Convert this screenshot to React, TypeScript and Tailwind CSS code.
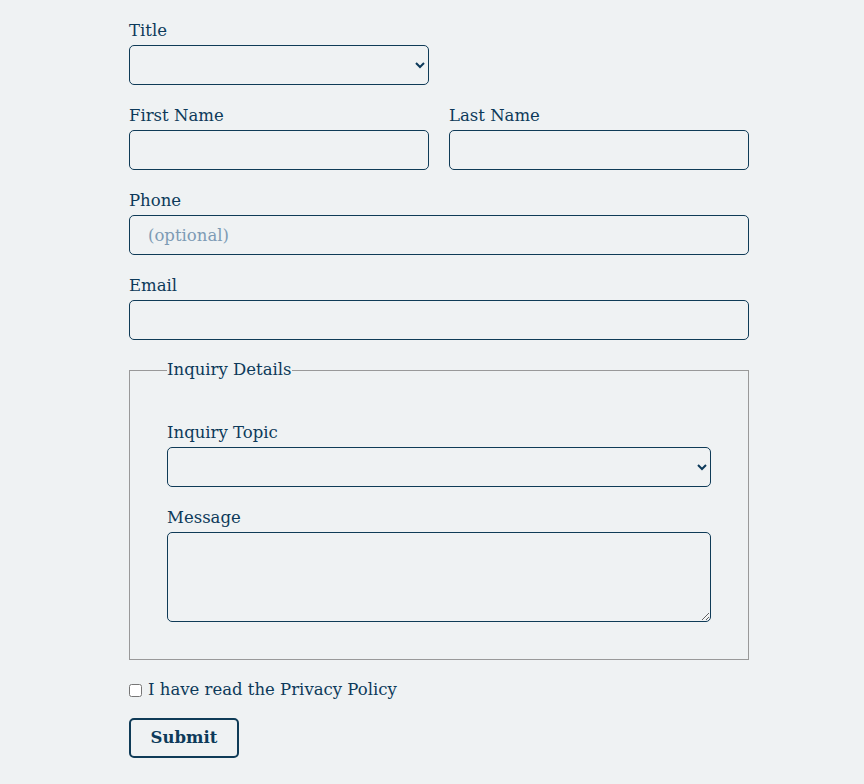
const font = { fontFamily: '"DejaVu Serif", serif' };

function Label({ children }: { children: React.ReactNode }) {
    return <label className="block text-[16.5px] leading-[22px] mb-[3px] text-[#0d3a5a]">{children}</label>;
}

const inputCls =
    "block w-full h-[40px] rounded-[5px] border border-[#0f3b57] bg-transparent px-[18px] text-[16.5px] text-[#0d3a5a] placeholder:text-[#7d9bb5] outline-none";

export default function App() {
    return (
        <div className="min-h-[784px] bg-[#eff2f3] pt-[20px]" style={font}>
            <form className="w-[620px] ml-[129px] text-[#0d3a5a]">
                <div className="mb-[20px]">
                    <Label>Title</Label>
                    <select className={inputCls + " w-[300px] px-[6px]"} style={{ width: 300 }}>
                        <option></option>
                    </select>
                </div>
                <div className="mb-[20px] grid grid-cols-2 gap-[20px]">
                    <div>
                        <Label>First Name</Label>
                        <input className={inputCls} />
                    </div>
                    <div>
                        <Label>Last Name</Label>
                        <input className={inputCls} />
                    </div>
                </div>
                <div className="mb-[20px]">
                    <Label>Phone</Label>
                    <input className={inputCls} placeholder="(optional)" />
                </div>
                <div className="mb-[19px]">
                    <Label>Email</Label>
                    <input className={inputCls} />
                </div>
                <fieldset className="border border-[#999] px-[37px] pt-[41px] pb-[37px]">
                    <legend className="text-[16.5px] leading-[22px]">Inquiry Details</legend>
                    <div className="mb-[20px]">
                        <Label>Inquiry Topic</Label>
                        <select className={inputCls + " px-[6px]"}>
                            <option></option>
                        </select>
                    </div>
                    <div>
                        <Label>Message</Label>
                        <textarea className="block w-full h-[90px] rounded-[5px] border border-[#0f3b57] bg-transparent px-[18px] py-[8px] text-[16.5px] outline-none" />
                    </div>
                </fieldset>
                <div className="mt-[19px] flex items-center h-[22px]">
                    <input type="checkbox" className="w-[13px] h-[13px] m-0 mr-[6px]" />
                    <span className="text-[16.5px] leading-[22px]">I have read the Privacy Policy</span>
                </div>
                <button
                    type="button"
                    className="mt-[17px] w-[110px] h-[40px] rounded-[5px] border-2 border-[#0f3b57] text-[16.5px] font-bold text-[#0d3a5a] bg-transparent"
                >
                    Submit
                </button>
            </form>
        </div>
    );
}
